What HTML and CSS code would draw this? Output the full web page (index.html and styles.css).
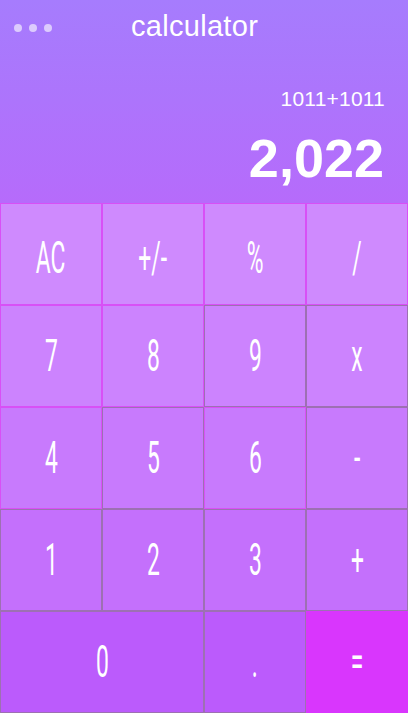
FILE: index.html
```html
<!DOCTYPE html>
<html>
<head>
<meta charset="utf-8">
<link rel="stylesheet" href="styles.css">
</head>
<body>
<div class="app">
  <header class="display">
    <div class="topbar">
      <div class="dots"><span class="dot"></span><span class="dot"></span><span class="dot"></span></div>
      <div class="title">calculator</div>
    </div>
    <div class="expr">1011+1011</div>
    <div class="result">2,022</div>
  </header>
  <div class="keys">
    <button class="key r1 hot low"><span>AC</span></button>
    <button class="key r1 hot low"><span>+/-</span></button>
    <button class="key r1 hot low"><span>%</span></button>
    <button class="key r1 hot low"><span>/</span></button>
    <button class="key r2 hot"><span>7</span></button>
    <button class="key r2 hot"><span>8</span></button>
    <button class="key r2"><span>9</span></button>
    <button class="key r2"><span>x</span></button>
    <button class="key r3 hot"><span>4</span></button>
    <button class="key r3"><span>5</span></button>
    <button class="key r3 hot"><span>6</span></button>
    <button class="key r3"><span>-</span></button>
    <button class="key r4"><span>1</span></button>
    <button class="key r4"><span>2</span></button>
    <button class="key r4"><span>3</span></button>
    <button class="key r4"><span>+</span></button>
    <button class="key r5 wide"><span>0</span></button>
    <button class="key r5"><span>.</span></button>
    <button class="key eq"><span>=</span></button>
  </div>
</div>
</body>
</html>
```
FILE: styles.css
```css
* { box-sizing: border-box; }
html, body { margin: 0; padding: 0; }
body {
  width: 408px;
  height: 713px;
  overflow: hidden;
  font-family: "Liberation Sans", Arial, sans-serif;
  background: #b86cfb;
}
.app {
  display: flex;
  flex-direction: column;
  width: 408px;
  height: 713px;
}
.display {
  height: 203px;
  display: flex;
  flex-direction: column;
  color: #fff;
  background: linear-gradient(to bottom, #a67cfd 0%, #ad74fc 50%, #b66bfb 100%);
}
.topbar {
  height: 56px;
  display: flex;
  align-items: center;
}
.dots {
  display: flex;
  gap: 7px;
  padding-left: 14px;
  width: 131px;
}
.dot {
  width: 8px;
  height: 8px;
  border-radius: 50%;
  background: #dccbfd;
}
.title {
  font-size: 29px;
  line-height: 56px;
  color: #fff;
  margin-top: -4px;
  letter-spacing: 0.3px;
}
.expr {
  margin-top: 31px;
  font-size: 21px;
  line-height: 24px;
  text-align: right;
  padding-right: 23px;
  letter-spacing: 0.2px;
}
.result {
  margin-top: 17px;
  font-size: 54px;
  font-weight: bold;
  line-height: 60px;
  text-align: right;
  padding-right: 24px;
}
.keys {
  flex: 1;
  display: grid;
  grid-template-columns: repeat(4, 102px);
  grid-template-rows: repeat(5, 102px);
}
.key {
  margin: 0;
  padding: 0;
  border: 1px solid #9d70b2;
  color: #fff;
  display: flex;
  align-items: center;
  justify-content: center;
  font-family: Roboto, "Liberation Sans", sans-serif;
  font-weight: 400;
  font-size: 44px;
  line-height: 1;
}
.key span {
  display: inline-block;
  transform: scaleX(0.52);
}
.key.low span { margin-top: 8px; }
.key.hot { border-color: #d850f6; }
.r1 { background: #cf8afe; }
.r2 { background: #cc83fe; }
.r3 { background: #c87afd; }
.r4 { background: #c470fc; }
.r5 { background: #bb5bfc; }
.wide { grid-column: span 2; }
.eq { background: #d936fd; border-color: #d936fd; }
```
